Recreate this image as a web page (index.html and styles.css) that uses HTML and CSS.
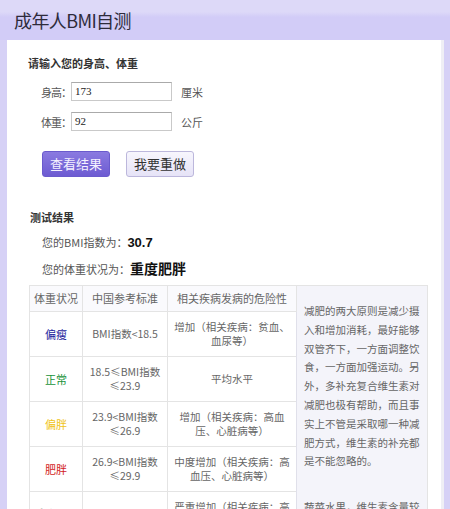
FILE: index.html
```html
<!DOCTYPE html>
<html lang="zh-CN">
<head>
<meta charset="utf-8">
<title>成年人BMI自测</title>
<link rel="stylesheet" href="styles.css">
</head>
<body>
<div class="page">
  <header class="titlebar"><h1>成年人BMI自测</h1></header>
  <main class="panel">
    <h2 class="sec-title">请输入您的身高、体重</h2>
    <div class="form">
      <div class="field"><span class="label">身高：</span><span class="input">173</span><span class="unit">厘米</span></div>
      <div class="field"><span class="label">体重：</span><span class="input">92</span><span class="unit">公斤</span></div>
    </div>
    <div class="buttons">
      <button class="btn btn-primary">查看结果</button>
      <button class="btn btn-secondary">我要重做</button>
    </div>
    <h2 class="sec-title result-title">测试结果</h2>
    <p class="line">您的BMI指数为：<b class="bmi">30.7</b></p>
    <p class="line">您的体重状况为：<b class="state">重度肥胖</b></p>
    <table class="bmi-table">
      <colgroup><col class="c1"><col class="c2"><col class="c3"><col class="c4"></colgroup>
      <tr class="head">
        <th>体重状况</th><th>中国参考标准</th><th>相关疾病发病的危险性</th>
        <td class="advice" rowspan="6">
          <p>减肥的两大原则是减少摄入和增加消耗，最好能够双管齐下，一方面调整饮食，一方面加强运动。另外，多补充复合维生素对减肥也极有帮助，而且事实上不管是采取哪一种减肥方式，维生素的补充都是不能忽略的。</p>
          <p class="p2">蔬菜水果，维生素含量较高</p>
        </td>
      </tr>
      <tr><td class="st thin">偏瘦</td><td>BMI指数&lt;18.5</td><td>增加（相关疾病：贫血、血尿等）</td></tr>
      <tr><td class="st normal">正常</td><td>18.5≤BMI指数≤23.9</td><td>平均水平</td></tr>
      <tr><td class="st over">偏胖</td><td>23.9&lt;BMI指数≤26.9</td><td>增加（相关疾病：高血压、心脏病等）</td></tr>
      <tr><td class="st fat">肥胖</td><td>26.9&lt;BMI指数≤29.9</td><td>中度增加（相关疾病：高血压、心脏病等）</td></tr>
      <tr><td class="st severe">重度肥胖</td><td>29.9&lt;BMI指数</td><td>严重增加（相关疾病：高血压、心脏病等）</td></tr>
    </table>
  </main>
</div>
</body>
</html>
```

FILE: styles.css
```css
html, body {
  margin: 0;
  padding: 0;
}
body {
  width: 450px;
  height: 509px;
  overflow: hidden;
  background: #d6d1f6;
  font-family: "Noto Sans CJK SC", "Noto Sans", sans-serif;
  color: #444;
}
.page {
  display: flex;
  flex-direction: column;
}
.titlebar {
  height: 40px;
  background: linear-gradient(#ddd9f8 0, #ddd9f8 12px, #d2ccf7 17px, #d2ccf7 100%);
  display: flex;
  align-items: center;
  padding-left: 14px;
}
.titlebar h1 {
  margin: 0;
  font-size: 18px;
  font-weight: normal;
  color: #2d2b3a;
  letter-spacing: -0.6px;
}
.panel {
  margin: 0 6px 0 7px;
  background: #fff;
  border-right: 3px solid #efeff5;
  padding: 15px 0 0 21px;
  height: 454px;
  overflow: hidden;
}
.sec-title {
  margin: 0;
  font-size: 11px;
  font-weight: bold;
  color: #333;
  line-height: 16px;
}
.form {
  display: flex;
  flex-direction: column;
  gap: 11px;
  margin: 11px 0 0 13px;
}
.field {
  display: flex;
  align-items: center;
  font-size: 11px;
  color: #555;
  line-height: 16px;
}
.label {
  width: 30px;
  flex-shrink: 0;
  white-space: nowrap;
  letter-spacing: -1px;
}
.input {
  box-sizing: border-box;
  width: 101px;
  height: 19px;
  border: 1px solid #c9c9c9;
  border-top-color: #aaa;
  font-family: "Liberation Serif", serif;
  font-size: 11px;
  line-height: 17px;
  padding-left: 3px;
  color: #222;
  background: #fff;
}
.unit {
  margin-left: 9px;
}
.buttons {
  display: flex;
  gap: 16px;
  margin: 20px 0 0 14px;
}
.btn {
  box-sizing: border-box;
  height: 26px;
  width: 68px;
  font-family: "Noto Sans CJK SC", sans-serif;
  font-size: 13px;
  border-radius: 3px;
  padding: 0;
  line-height: 24px;
}
.btn-primary {
  background: linear-gradient(#8a7ae0, #6d5bd2);
  border: 1px solid #6a5acd;
  color: #f4f2ff;
}
.btn-secondary {
  background: linear-gradient(#f7f6fd, #e6e3f7);
  border: 1px solid #bcb7dc;
  color: #333;
}
.result-title {
  margin-top: 32px;
  padding-left: 2px;
}
.line {
  margin: 9px 0 0 14px;
  font-size: 11px;
  color: #555;
  line-height: 16px;
}
.line + .line {
  margin-top: 9px;
}
.bmi {
  font-family: "Liberation Sans", sans-serif;
  font-size: 13px;
  color: #111;
}
.state {
  font-size: 14px;
  color: #111;
}
.bmi-table {
  margin: 8px 0 0 1px;
  width: 398px;
  table-layout: fixed;
  border-collapse: collapse;
  border: 1px solid #e2e2ec;
  font-size: 10.5px;
  color: #666;
}
.c1 { width: 53px; }
.c2 { width: 85px; }
.c3 { width: 129px; }
.c4 { width: 131px; }
.bmi-table th,
.bmi-table td {
  border: 1px solid #e4e4e4;
  text-align: center;
  vertical-align: middle;
  padding: 0 3px;
  line-height: 14px;
}
.bmi-table th {
  font-weight: normal;
  height: 24px;
  background: #fafafd;
  color: #666;
  font-size: 11px;
  white-space: nowrap;
}
.bmi-table tr:not(.head) td {
  height: 43px;
}
.bmi-table td.advice {
  vertical-align: top;
  text-align: left;
  background: #f4f4fa;
  border-left: 1px solid #e0e0ea;
  padding: 16px 6px 0 7px;
  font-size: 10.5px;
  line-height: 18.8px;
  color: #666;
}
.advice p {
  margin: 0;
}
.advice .p2 {
  margin-top: 27px;
}
.st { font-size: 11px; }
.bmi-table td.severe {
  color: #111;
  font-weight: bold;
  font-size: 11.5px;
  white-space: nowrap;
  padding: 0;
}
.thin { color: #1c1c9c; }
.normal { color: #17923a; }
.over { color: #f0c419; }
.fat { color: #d21d1d; }
```
